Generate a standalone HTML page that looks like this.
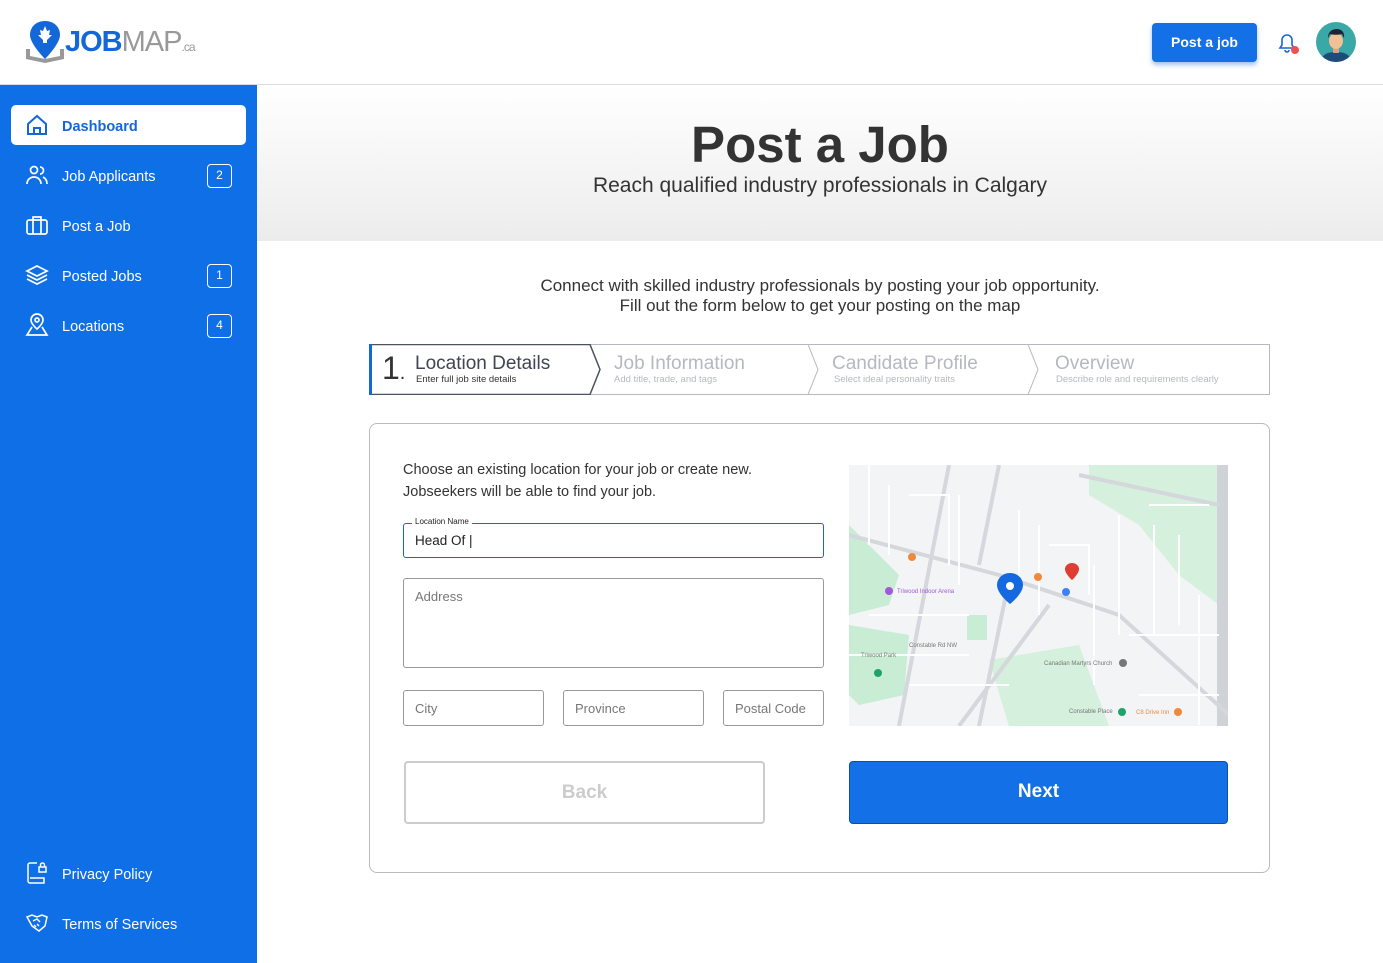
<!DOCTYPE html>
<html><head><meta charset="utf-8"><style>
*{box-sizing:border-box;margin:0;padding:0}
body{width:1383px;height:963px;overflow:hidden;font-family:"Liberation Sans",sans-serif;background:#fff;position:relative;color:#333}
.hdr{position:absolute;left:0;top:0;width:1383px;height:85px;border-bottom:1px solid #ddd;background:#fff}
.side{position:absolute;left:0;top:85px;width:257px;height:878px;background:#0f6fe6}
.nav{position:absolute;left:11px;width:235px;height:40px;color:#fff;font-size:14.5px;display:flex;align-items:center;padding-left:51px;padding-top:3px}
.nav svg{position:absolute;left:14px;top:8px}
.nav.act{background:#fff;color:#1467d8;font-weight:bold;border-radius:5px}
.badge{position:absolute;right:14px;top:9px;width:25px;height:24px;border:1.5px solid #fff;border-radius:4px;font-size:12px;text-align:center;line-height:21px}
.hero{position:absolute;left:257px;top:85px;width:1126px;height:156px;background:linear-gradient(#fff,#ececec)}
.st{font-size:19px;color:#b5b8bf;position:absolute}
.ss{font-size:9.5px;color:#b5b8bf;position:absolute}
.inp{position:absolute;border:1px solid #999;border-radius:3px;font-size:13px;color:#777;padding:11px}
</style></head><body>
<div class="hdr">
<svg style="position:absolute;left:24px;top:19px" width="42" height="46" viewBox="0 0 42 46"><path d="M2 30 L2 40 L21 44 L40 40 L40 30 L36 30 L36 37 L21 40 L6 37 L6 30Z" fill="#999"/><path d="M21 2C12 2 6 8 6 16C6 25 21 40 21 40S36 25 36 16C36 8 30 2 21 2Z" fill="#1467d8"/><path d="M21 7l2 5 3-1-1 5 3 0-5 5 0 3h-4l0-3-5-5 3 0-1-5 3 1z" fill="#fff"/></svg>
<div style="position:absolute;left:65px;top:26px;font-size:29px;letter-spacing:-1px"><b style="color:#1467d8">JOB</b><span style="color:#999">MAP</span><span style="color:#999;font-size:12px">.ca</span></div>
<div style="position:absolute;left:1152px;top:23px;width:105px;height:39px;background:#1470e6;border-radius:4px;color:#fff;font-weight:bold;font-size:14px;text-align:center;line-height:39px;box-shadow:0 3px 5px rgba(20,100,220,.4)">Post a job</div>
<svg style="position:absolute;left:1276px;top:31px" width="24" height="24" viewBox="0 0 24 24"><path d="M4 17h14l-2-3V9a5 5 0 0 0-10 0v5z" fill="none" stroke="#1467d8" stroke-width="1.6"/><path d="M9 19a2 2 0 0 0 4 0" fill="none" stroke="#1467d8" stroke-width="1.6"/><circle cx="19" cy="19" r="4" fill="#f0504f"/></svg>
<svg style="position:absolute;left:1316px;top:22px" width="40" height="40" viewBox="0 0 40 40"><circle cx="20" cy="20" r="20" fill="#3aa8a6"/><clipPath id="c"><circle cx="20" cy="20" r="20"/></clipPath><g clip-path="url(#c)"><path d="M4 40c2-8 8-10 16-10s14 2 16 10z" fill="#1d4b7a"/><rect x="17" y="24" width="6" height="7" fill="#d9a27e"/><ellipse cx="20" cy="19" rx="7" ry="8" fill="#f0c096"/><path d="M12 16c0-7 5-9 9-9s8 3 7 9l-2-4c-4 1-8 1-12 0z" fill="#1e2530"/></g></svg>
</div>
<div class="side">
<div class="nav act" style="top:20px"><svg width="24" height="24" viewBox="0 0 24 24" fill="none" stroke="#1467d8" stroke-width="2"><path d="M3 11L12 3l9 8v10H3z"/><path d="M9 21v-6h6v6"/></svg>Dashboard</div>
<div class="nav" style="top:70px"><svg width="24" height="24" viewBox="0 0 24 24" fill="none" stroke="#fff" stroke-width="1.7"><circle cx="9" cy="7" r="3.5"/><path d="M2 21c0-4 3-7 7-7s7 3 7 7"/><path d="M15 4a3.5 3.5 0 0 1 0 7M18 14c2 1 4 3 4 7"/></svg>Job Applicants<span class="badge">2</span></div>
<div class="nav" style="top:120px"><svg width="24" height="24" viewBox="0 0 24 24" fill="none" stroke="#fff" stroke-width="1.7"><rect x="2" y="7" width="20" height="14" rx="2"/><path d="M8 7V4h8v3M8 7v14M16 7v14"/></svg>Post a Job</div>
<div class="nav" style="top:170px"><svg width="24" height="24" viewBox="0 0 24 24" fill="none" stroke="#fff" stroke-width="1.7"><path d="M12 3l10 5-10 5-10-5z"/><path d="M2 12l10 5 10-5M2 16l10 5 10-5"/></svg>Posted Jobs<span class="badge">1</span></div>
<div class="nav" style="top:220px"><svg width="24" height="24" viewBox="0 0 24 24" fill="none" stroke="#fff" stroke-width="1.7"><path d="M12 16s6-5 6-9a6 6 0 0 0-12 0c0 4 6 9 6 9z"/><circle cx="12" cy="7" r="2"/><path d="M7 14l-5 8h20l-5-8"/></svg>Locations<span class="badge">4</span></div>
<div class="nav" style="top:768px"><svg width="24" height="24" viewBox="0 0 24 24" fill="none" stroke="#fff" stroke-width="1.5"><path d="M12 2H5a2 2 0 0 0-2 2v16a2 2 0 0 0 2 2h14v-5H5"/><rect x="14" y="6" width="7" height="5"/><path d="M15.5 6V4a2 2 0 0 1 4 0v2"/></svg>Privacy Policy</div>
<div class="nav" style="top:818px"><svg width="24" height="24" viewBox="0 0 24 24" fill="none" stroke="#fff" stroke-width="1.5"><path d="M2 6l5-2 5 2 5-2 5 2-2 9-6 5-7-5z"/><path d="M8 10l4-2 3 3M9 14l2 2M12 13l2 2"/></svg>Terms of Services</div>
</div>
<div class="hero"><div style="position:absolute;left:0;width:1126px;top:30px;text-align:center;font-size:51px;font-weight:bold;color:#333">Post a Job</div><div style="position:absolute;left:0;width:1126px;top:89px;text-align:center;font-size:21px;color:#333">Reach qualified industry professionals in Calgary</div></div>
<div style="position:absolute;left:257px;width:1126px;top:276px;text-align:center;font-size:17px;line-height:19.5px;color:#333">Connect with skilled industry professionals by posting your job opportunity.<br>Fill out the form below to get your posting on the map</div>
<div style="position:absolute;left:369px;top:344px;width:901px;height:51px;border:1px solid #b5b8bf"></div>
<svg style="position:absolute;left:369px;top:344px" width="901" height="51"><path d="M1 0.5H221L231 25.5 221 50.5H1Z" fill="#fff" stroke="#4a5160" stroke-width="1.5"/><rect x="0" y="0" width="3" height="51" fill="#1467d8"/><path d="M439 0.5L449 25.5 439 50.5M659 0.5L669 25.5 659 50.5" fill="none" stroke="#b5b8bf"/></svg>
<div style="position:absolute;left:382px;top:350px;font-size:32px;color:#333">1<span style="font-size:20px">.</span></div>
<div class="st" style="left:415px;top:353px;color:#3f4552">Location Details</div><div class="ss" style="left:416px;top:374px;color:#333">Enter full job site details</div>
<div class="st" style="left:614px;top:353px">Job Information</div><div class="ss" style="left:614px;top:374px">Add title, trade, and tags</div>
<div class="st" style="left:832px;top:353px">Candidate Profile</div><div class="ss" style="left:834px;top:374px">Select ideal personality traits</div>
<div class="st" style="left:1055px;top:353px">Overview</div><div class="ss" style="left:1056px;top:374px">Describe role and requirements clearly</div>
<div style="position:absolute;left:369px;top:423px;width:901px;height:450px;border:1px solid #bbb;border-radius:8px"></div>
<div style="position:absolute;left:403px;top:459px;font-size:14.5px;line-height:22px;color:#333">Choose an existing location for your job or create new.<br>Jobseekers will be able to find your job.</div>
<div style="position:absolute;left:403px;top:523px;width:421px;height:35px;border:1px solid #1467d8;border-radius:3px;font-size:13.5px;padding:9px 11px;color:#222">Head Of |</div>
<div style="position:absolute;left:412px;top:517px;background:#fff;padding:0 3px;font-size:8px;color:#222">Location Name</div>
<div class="inp" style="left:403px;top:578px;width:421px;height:90px;padding-top:10px">Address</div>
<div class="inp" style="left:403px;top:690px;width:141px;height:36px;padding-top:10px">City</div>
<div class="inp" style="left:563px;top:690px;width:141px;height:36px;padding-top:10px">Province</div>
<div class="inp" style="left:723px;top:690px;width:101px;height:36px;padding-top:10px">Postal Code</div>
<svg style="position:absolute;left:849px;top:465px" width="379" height="261" viewBox="0 0 379 261">
<rect width="379" height="261" fill="#f3f4f5"/>
<path d="M0 60 L0 150 L40 140 L50 110 Z" fill="#c9ecd5"/><path d="M0 160 L60 170 L55 230 L10 240 L0 230Z" fill="#c9ecd5"/><path d="M140 195 L230 180 L260 261 L160 261Z" fill="#d5f0dd"/><path d="M240 0 L370 0 L370 140 L330 110 L290 60 L240 30Z" fill="#d5f0dd"/><rect x="118" y="150" width="20" height="25" fill="#c9ecd5"/>
<rect x="368" y="0" width="11" height="261" fill="#cfd3d8"/>
<g stroke="#d4d7db" stroke-width="4" fill="none"><path d="M0 70 L150 110 L270 150 L380 250"/><path d="M100 0 L50 261"/><path d="M150 0 L130 100"/><path d="M230 10 L370 40"/><path d="M160 115 L130 261"/><path d="M200 140 L110 261"/></g>
<g stroke="#fff" stroke-width="2" fill="none"><path d="M20 0V80M40 20V90M60 30h40v70M110 30v90M170 45v80M190 60v90M200 80h40v50M245 100v120M270 50v120M305 60v110M330 70v90M20 150h100M0 190h120M60 220h100M280 170h90M290 230h80M350 130v130M300 40h60"/></g>
<path d="M161 108c-8 0-13 6-13 12 0 9 13 19 13 19s13-10 13-19c0-6-5-12-13-12z" fill="#1569e0"/><circle cx="161" cy="121" r="4" fill="#fff"/>
<path d="M223 98c-4 0-7 3-7 6 0 5 7 11 7 11s7-6 7-11c0-3-3-6-7-6z" fill="#e03c31"/>
<circle cx="63" cy="92" r="4" fill="#f08a3a"/><circle cx="189" cy="112" r="4" fill="#f08a3a"/><circle cx="329" cy="247" r="4" fill="#f08a3a"/><circle cx="40" cy="126" r="4" fill="#a05ad8"/><circle cx="217" cy="127" r="4" fill="#3b82f6"/><circle cx="29" cy="208" r="4" fill="#1ea36a"/><circle cx="273" cy="247" r="4" fill="#1ea36a"/><circle cx="274" cy="198" r="4" fill="#777"/>
<g font-size="6" fill="#777"><text x="48" y="128" fill="#a05ad8">Triwood Indoor Arena</text><text x="195" y="200">Canadian Martyrs Church</text><text x="287" y="249" fill="#f08a3a">C8 Drive Inn</text><text x="220" y="248">Constable Place</text><text x="12" y="192">Triwood Park</text><text x="60" y="182">Constable Rd NW</text></g>
</svg>
<div style="position:absolute;left:404px;top:761px;width:361px;height:63px;border:2px solid #ccc;border-radius:4px;color:#ccc;font-size:19px;font-weight:bold;text-align:center;line-height:59px">Back</div>
<div style="position:absolute;left:849px;top:761px;width:379px;height:63px;background:#1470e6;border:1.5px solid #0d4fb0;border-radius:4px;color:#fff;font-size:19px;font-weight:bold;text-align:center;line-height:60px">Next</div>
</body></html>
